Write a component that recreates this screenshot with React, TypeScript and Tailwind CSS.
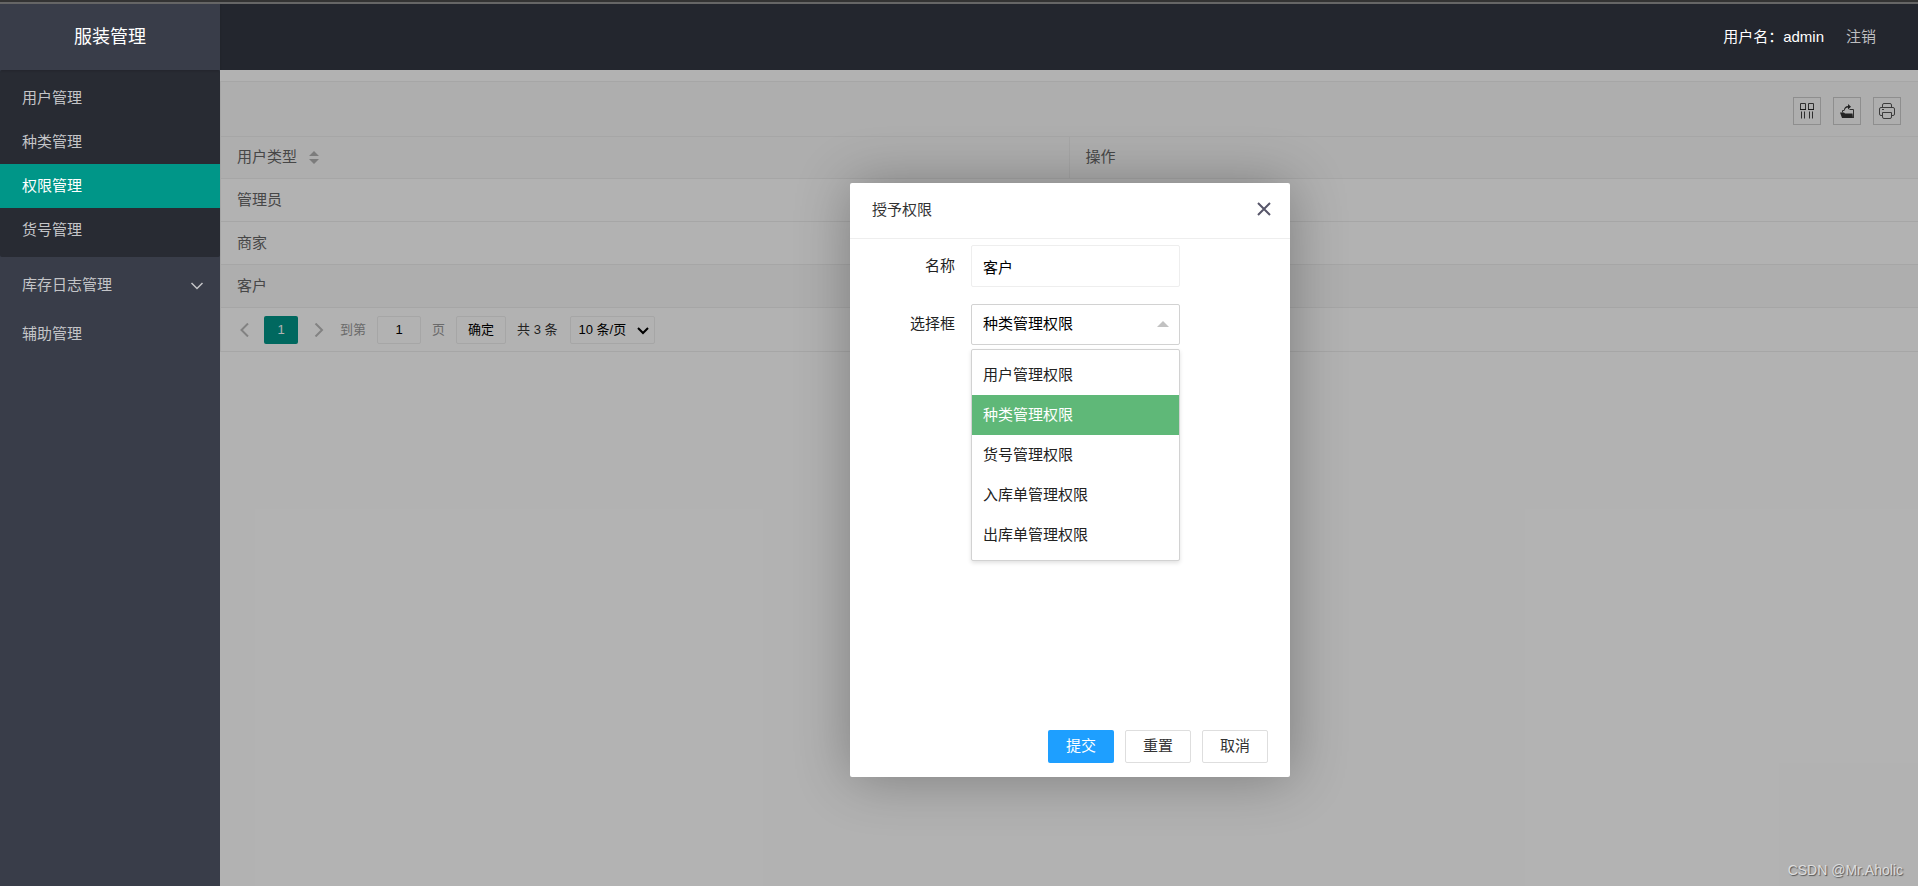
import { useState } from 'react';

interface NavItem {
  name: string;
  active?: boolean;
}

const SUB_MENU: NavItem[] = [
  { name: '用户管理' },
  { name: '种类管理' },
  { name: '权限管理', active: true },
  { name: '货号管理' },
];

const USER_TYPES = ['管理员', '商家', '客户'];

const PERMISSIONS = ['用户管理权限', '种类管理权限', '货号管理权限', '入库单管理权限', '出库单管理权限'];

function ColumnsIcon() {
  return (
    <svg width="16" height="16" viewBox="0 0 16 16" fill="none" stroke="#444">
      <path d="M1.5 7V.5h5V7M9.5 7V.5h5V7" />
      <path d="M1 6.500h6M9 6.500h6" stroke="#222" />
      <path d="M2.500 8.500v7M5.500 8.500v7M10.500 8.500v7M13.500 8.500v7" />
    </svg>
  );
}

function ExportIcon() {
  return (
    <svg width="16" height="16" viewBox="0 0 16 16" fill="#333">
      <path d="M1 9.500h4l1 1h7.500L14 15H3z" />
      <path d="M3.500 9.500V7.500H5M10.500 6.500h4V15" fill="none" stroke="#444" />
      <path d="M5 7.500C5 4.500 6.500 3 9 3V1l3 2.800L9 6.500v-2C7.200 4.500 6 5.500 5.800 7.500z" />
    </svg>
  );
}

function PrintIcon() {
  return (
    <svg width="16" height="16" viewBox="0 0 16 16" fill="none" stroke="#555">
      <path d="M3.500 4V2A1.500 1.500 0 0 1 5 .5h6A1.500 1.500 0 0 1 12.500 2v2" />
      <path d="M3.500 12.500H2A1.500 1.500 0 0 1 .5 11V6A1.500 1.500 0 0 1 2 4.500h12A1.500 1.500 0 0 1 15.500 6v5a1.500 1.500 0 0 1-1.500 1.500h-1.500" />
      <path d="M3.500 9.500h9V14a1.500 1.500 0 0 1-1.500 1.500H5A1.500 1.500 0 0 1 3.500 14zM3 6.500h2" />
    </svg>
  );
}

function Chevron({ d, className = '' }: { d: string; className?: string }) {
  return (
    <svg width="14" height="14" viewBox="0 0 14 14" fill="none" stroke="currentColor" className={className}>
      <path d={d} />
    </svg>
  );
}

function Sidebar() {
  return (
    <aside className="w-[220px] shrink-0 bg-[#393d49] text-[15px] text-[#c4c5c8]">
      <h1 className="relative flex h-[66px] items-center justify-center text-[18px] text-white shadow-[0_1px_2px_rgba(0,0,0,0.15)]">
        服装管理
      </h1>
      <nav>
        <ul className="mb-[4px] rounded-xs bg-[#282b33] pt-[6px] pb-[5px]">
          {SUB_MENU.map(item => (
            <li key={item.name}>
              <a
                href="#"
                className={`flex h-[44px] items-center px-[22px] ${item.active ? 'bg-[#009688] text-white' : ''}`}
              >
                {item.name}
              </a>
            </li>
          ))}
        </ul>
        <a href="#" className="flex h-[49px] items-center justify-between pr-[16px] pl-[22px]">
          库存日志管理
          <Chevron d="M1.500 4l5.500 5.500L12.500 4" className="stroke-[1.500]" />
        </a>
        <a href="#" className="flex h-[49px] items-center px-[22px]">
          辅助管理
        </a>
      </nav>
    </aside>
  );
}

function Pager() {
  return (
    <div className="flex h-[44px] items-center border-b border-[#eee] pl-[16px] text-[13px] text-[#333]">
      <button aria-label="上一页" className="mr-[13px] text-[#bbb]">
        <Chevron d="M11 .5L4.500 7l6.500 6.500" className="stroke-2" />
      </button>
      <button className="h-[28px] w-[34px] rounded-xs bg-[#009688] text-white">1</button>
      <button aria-label="下一页" className="ml-[14px] text-[#bbb]">
        <Chevron d="M3.500 .5L10 7l-6.500 6.500" className="stroke-2" />
      </button>
      <label htmlFor="page" className="ml-[14px] text-[#999]">到第</label>
      <input
        id="page"
        defaultValue="1"
        className="mx-[11px] h-[28px] w-[44px] rounded-xs border border-[#eee] text-center text-black"
      />
      <span className="text-[#999]">页</span>
      <button className="mx-[11px] h-[28px] w-[50px] rounded-xs border border-[#eee] text-black">确定</button>
      <span>共 3 条</span>
      <div className="relative ml-[12px]">
        <select
          aria-label="每页条数"
          className="h-[28px] w-[85px] appearance-none rounded-xs border border-[#eee] pl-[8px] text-black"
        >
          <option>10 条/页</option>
        </select>
        <Chevron d="M2 5l5 5 5-5" className="pointer-events-none absolute top-[7px] right-[5px] stroke-2 text-black" />
      </div>
    </div>
  );
}

function UserTypeTable() {
  return (
    <section className="mt-[11px] border-t border-l border-[#eee] text-[15px] text-[#666]">
      <div className="flex h-[55px] items-end justify-end gap-[12px] border-b border-[#eee] bg-[#fafafa] pr-[17px] pb-[11px]">
        <button aria-label="筛选列" className="flex size-[28px] items-center justify-center border border-[#ccc]">
          <ColumnsIcon />
        </button>
        <button aria-label="导出" className="flex size-[28px] items-center justify-center border border-[#ccc]">
          <ExportIcon />
        </button>
        <button aria-label="打印" className="flex size-[28px] items-center justify-center border border-[#ccc]">
          <PrintIcon />
        </button>
      </div>
      <table className="w-full table-fixed border-separate border-spacing-0 text-left">
        <thead className="bg-[#fafafa]">
          <tr className="h-[42px]">
            <th className="border-r border-b border-[#eee] px-[16px] font-normal">
              <span className="flex items-center gap-[12px]">
                用户类型
                <svg width="10" height="13" viewBox="0 0 10 13" fill="#b2b2b2">
                  <path d="M0 5l5-5 5 5zM0 8l5 5 5-5z" />
                </svg>
              </span>
            </th>
            <th className="border-b border-[#eee] px-[16px] font-normal">操作</th>
          </tr>
        </thead>
        <tbody>
          {USER_TYPES.map(type => (
            <tr key={type} className="h-[43px] last:bg-[#fafafa]">
              <td className="border-b border-[#eee] px-[16px]">{type}</td>
              <td className="border-b border-[#eee]" />
            </tr>
          ))}
        </tbody>
      </table>
      <Pager />
    </section>
  );
}

function GrantDialog() {
  const [permission, setPermission] = useState('种类管理权限');

  return (
    <div
      role="dialog"
      aria-label="授予权限"
      className="flex h-[594px] w-[440px] flex-col rounded-xs bg-white text-[15px] text-[#222] shadow-[1px_1px_55px_rgba(0,0,0,0.3)]"
    >
      <div className="flex h-[56px] items-center justify-between border-b border-[#eee] pr-[19px] pl-[22px] text-[#333]">
        <h2>授予权限</h2>
        <button aria-label="关闭" className="pb-[4px]">
          <svg width="14" height="14" viewBox="0 0 14 14" stroke="#57566a" strokeWidth="2">
            <path d="M1 1l12 12M13 1L1 13" />
          </svg>
        </button>
      </div>
      <form className="flex flex-1 flex-col pt-[6px]">
        <div className="mb-[17px] flex items-center">
          <label htmlFor="name" className="w-[121px] pr-[16px] text-right">名称</label>
          <input
            id="name"
            defaultValue="客户"
            className="h-[42px] w-[209px] rounded-xs border border-[#eee] px-[11px] text-black"
          />
        </div>
        <div className="flex items-center">
          <label htmlFor="permission" className="w-[121px] pr-[16px] text-right">选择框</label>
          <div className="relative">
            <select
              id="permission"
              value={permission}
              onChange={e => setPermission(e.target.value)}
              className="block h-[41px] w-[209px] appearance-none rounded-xs border border-[#d2d2d2] px-[11px] text-black"
            >
              {PERMISSIONS.map(p => (
                <option key={p}>{p}</option>
              ))}
            </select>
            <svg width="12" height="6" viewBox="0 0 12 6" fill="#c2c2c2" className="pointer-events-none absolute top-[17px] right-[11px]">
              <path d="M0 6l6-6 6 6z" />
            </svg>
            <ul className="absolute top-full left-0 mt-[4px] w-full rounded-xs border border-[#d2d2d2] bg-white py-[5px] shadow-[0_2px_4px_rgba(0,0,0,0.12)]">
              {PERMISSIONS.map(p => (
                <li
                  key={p}
                  onClick={() => setPermission(p)}
                  className={`flex h-[40px] items-center px-[11px] ${p === permission ? 'bg-[#5fb878] text-white' : ''}`}
                >
                  {p}
                </li>
              ))}
            </ul>
          </div>
        </div>
        <div className="mt-auto flex justify-end gap-[11px] pr-[22px] pb-[14px] text-[#333]">
          <button type="button" className="h-[33px] w-[66px] rounded-xs bg-[#1e9fff] text-white">提交</button>
          <button type="reset" className="h-[33px] w-[66px] rounded-xs border border-[#dedede]">重置</button>
          <button type="button" className="h-[33px] w-[66px] rounded-xs border border-[#dedede]">取消</button>
        </div>
      </form>
    </div>
  );
}

export default function App() {
  return (
    <div className="flex min-h-screen flex-col font-['Liberation_Sans','Noto_Sans_CJK_SC',sans-serif]">
      <div className="h-[4px] border-b-2 border-[#666] bg-[#333]" />
      <div className="flex flex-1">
        <Sidebar />
        <div className="flex flex-1 flex-col">
          <header className="flex h-[66px] items-center justify-end gap-[22px] bg-[#23262e] pr-[42px] text-[15px]">
            <span className="text-white">用户名：admin</span>
            <a href="#" className="text-[#bdbec0]">注销</a>
          </header>
          <main className="relative flex-1 bg-white">
            <UserTypeTable />
            <div className="absolute inset-0 flex items-start justify-center overflow-hidden bg-black/30 pt-[113px] pl-[2px]">
              <GrantDialog />
            </div>
            <p className="absolute right-[15px] bottom-[5px] text-[14px] text-[#ddd] [text-shadow:1px_1px_1px_#555]">
              CSDN @Mr.Aholic
            </p>
          </main>
        </div>
      </div>
    </div>
  );
}
